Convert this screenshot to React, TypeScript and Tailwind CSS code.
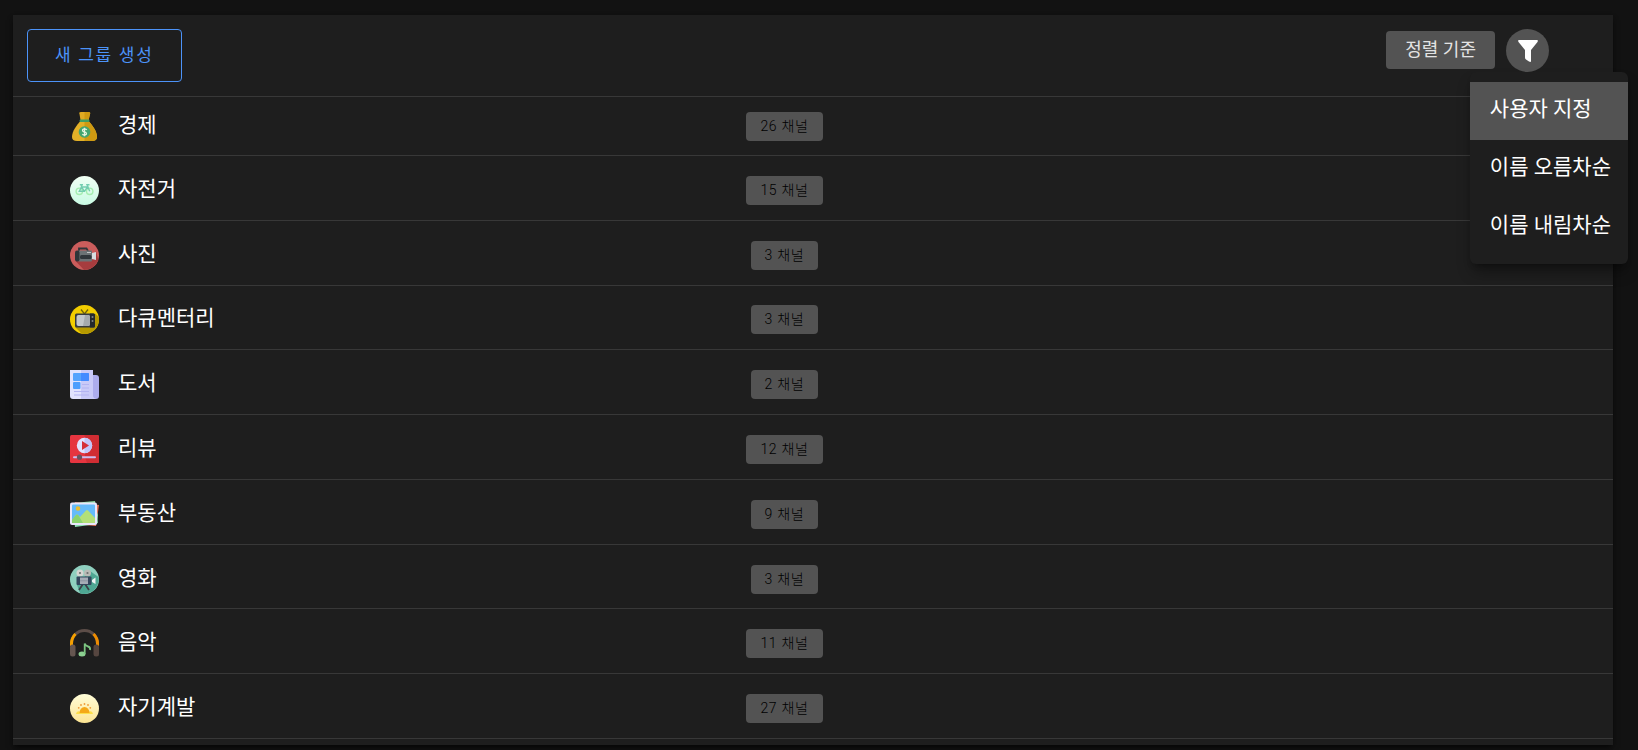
import type { ReactNode } from "react";

function MoneyIcon() {
  return (
    <>
      <path d="M9.500 2Q8.500 0 11 0H18Q21 0 20 2L18.500 8H10.500Z" fill="#e0ab23" />
      <path d="M10.500 9H18.500C22 13 27 19 27 25Q27 29 22 29H7Q2 29 2 25C2 19 7 13 10.500 9Z" fill="#e3b128" />
      <path d="M14.500 0H18Q21 0 20 2L18.500 9C22 13 27 19 27 25Q27 29 22 29H14.500Z" fill="#cf9a12" />
      <rect x="9.500" y="7.500" width="10" height="2.500" rx="1.200" fill="#3f9d63" />
      <circle cx="14.500" cy="20" r="5.800" fill="#43a56f" />
      <path d="M16.800 17.800Q14.500 16 12.700 17.600Q12 19.500 14.500 20Q17 20.600 16.300 22.300Q14.500 24 12.300 22.200M14.500 15.800V24.200" fill="none" stroke="#e6f3df" strokeWidth="1.300" />
    </>
  );
}

function BicycleIcon() {
  return (
    <>
      <defs>
        <linearGradient id="bike-bg" x1="0" y1="0" x2="0" y2="1">
          <stop offset="0" stopColor="#f1fff4" />
          <stop offset="1" stopColor="#c9fbe4" />
        </linearGradient>
      </defs>
      <circle cx="14.500" cy="14.500" r="14.500" fill="url(#bike-bg)" />
      <g fill="none" strokeWidth="1.400">
        <circle cx="9.300" cy="15.300" r="3.200" stroke="#a5eeb0" />
        <circle cx="19.700" cy="15.300" r="3.200" stroke="#a5eeb0" />
        <path d="M9.300 15.300L11.500 11H17.500L14.500 15.300ZM11.500 11L14.500 15.300M19.700 15.300L17 8.800H19.500M11.500 11V8.800M9.800 8.800H13" stroke="#74cdb0" />
      </g>
    </>
  );
}

function CamcorderIcon() {
  return (
    <>
      <circle cx="14.500" cy="14.500" r="14.500" fill="#cb5d5c" />
      <path d="M5.500 20L14 28.900Q24 29 28.400 19L26 10L22 19Z" fill="#a63c3e" />
      <path d="M9 10V7.500H16.500L18 10" fill="none" stroke="#303539" strokeWidth="1.800" />
      <rect x="8" y="9.500" width="14" height="11" rx="1" fill="#6c7275" />
      <rect x="5" y="9.500" width="4.500" height="11" rx="2" fill="#303539" />
      <rect x="10" y="14" width="11.500" height="4" rx="1.500" fill="#30363b" />
      <path d="M17 11.500H21" stroke="#bfc3c5" />
      <path d="M22 12L26 11V19L22 18Z" fill="#d9dde0" />
    </>
  );
}

function TelevisionIcon() {
  return (
    <>
      <circle cx="14.500" cy="14.500" r="14.500" fill="#f2cd00" />
      <path d="M5.500 22.500L11.500 28.600A14.500 14.500 0 0 0 28.800 12L25 8.500Z" fill="#b69900" />
      <path d="M11 4.500L14.500 9L18 4.500" fill="none" stroke="#70620c" strokeWidth="1.300" />
      <rect x="5" y="8.500" width="20" height="14" rx="1.500" fill="#373b3f" />
      <path d="M20 8.500H23.500Q25 8.500 25 10V21Q25 22.500 23.500 22.500H20Z" fill="#24282c" />
      <rect x="6.500" y="10" width="13.500" height="11" rx="2" fill="#c3c7ca" />
      <path d="M15 10H18Q20 10 20 12V19Q20 21 18 21H13Z" fill="#a5aaae" />
      <circle cx="22.500" cy="12" r="1" fill="#81868a" />
      <circle cx="22.500" cy="16" r="1" fill="#81868a" />
    </>
  );
}

function NewspaperIcon() {
  return (
    <>
      <path d="M22 5H26Q29 5 29 8V26Q29 29 26 29H20Z" fill="#acaced" />
      <path d="M0 0H23V26Q23 29 26 29H3Q0 29 0 26Z" fill="#e2e3fd" />
      <path d="M11 0H23V26Q23 29 26 29H11Z" fill="#c9caf8" />
      <rect x="3" y="3" width="16" height="8" rx="1" fill="#56a4fd" />
      <path d="M11 3H18Q19 3 19 4V10Q19 11 18 11H11Z" fill="#438bff" />
      <rect x="3" y="12" width="7.500" height="7" rx="1" fill="#4f9ffd" />
      <path d="M12 14.500H19M12 18H19M4 21.500H19M4 25H19" stroke="#b3b4f2" />
    </>
  );
}

function VideoIcon() {
  return (
    <>
      <rect width="29" height="28" rx="1.500" fill="#e63540" />
      <path d="M14.500 0H27.500Q29 0 29 1.500V26.500Q29 28 27.500 28H17Q13 20 14.500 0Z" fill="#d02d33" />
      <circle cx="14.500" cy="10.500" r="7.700" fill="#e1e3ff" />
      <path d="M14.500 2.800A7.700 7.700 0 0 1 14.500 18.200Z" fill="#c3c6fa" />
      <path d="M12 6L19 10.500L12 15Z" fill="#d62f38" />
      <path d="M4 22.200H25" stroke="#ccbdf0" strokeWidth="2" strokeLinecap="round" />
      <circle cx="9.500" cy="22.200" r="2.600" fill="#69535f" />
    </>
  );
}

function PhotosIcon() {
  return (
    <>
      <path d="M3 3L25 1L28 23L6 26Z" fill="#8bd9a0" />
      <path d="M5 2L29 5L26 26L3 24Z" fill="#e7765b" />
      <path d="M24 3L28 15L27 24L5 27L3 5Z" fill="#8fe1b7" />
      <rect y="2.500" width="27" height="22.500" rx="2" fill="#e9e7fb" />
      <rect x="2" y="4.500" width="23" height="18.500" rx="1" fill="#65bbfa" />
      <circle cx="8" cy="8.500" r="2.300" fill="#e9bd32" />
      <path d="M2 20L6 15Q7 14 8.500 15.500L10 17L16 10.500Q17 9.500 18 10.500L25 18V23H2Z" fill="#b3e078" />
      <path d="M2 20L6 15Q7 14 8.500 15.500L13 23H2Z" fill="#8bd36e" />
    </>
  );
}

function MovieCameraIcon() {
  return (
    <>
      <circle cx="14.500" cy="14.500" r="14.500" fill="#8fd0bf" />
      <path d="M20 6L28.500 12A14.500 14.500 0 0 1 10 28.300L7 20Z" fill="#4ea793" />
      <path d="M13 19L9 25M15 19L19 25" stroke="#3c4148" strokeWidth="1.800" />
      <circle cx="10" cy="8" r="3.500" fill="#d6d6d2" />
      <circle cx="17.500" cy="8" r="3.500" fill="#b9bab6" />
      <circle cx="10" cy="8" r="1.100" fill="#6d7070" />
      <circle cx="17.500" cy="8" r="1.100" fill="#6d7070" />
      <rect x="6.500" y="11.500" width="15" height="8.500" rx="1" fill="#34465d" />
      <rect x="10" y="12.500" width="8" height="6.500" fill="#a5acb6" />
      <path d="M10 15.800H18" stroke="#8c95a2" />
      <path d="M22 15L25.500 12.500V19L22 17Z" fill="#f0f3f3" />
    </>
  );
}

function HeadphonesIcon() {
  return (
    <>
      <path d="M1.500 17V14.500A13 13 0 0 1 27.500 14.500V17" fill="none" stroke="#5c4d48" strokeWidth="3" />
      <path d="M1.500 17V14.500Q1.500 9 5.500 5" fill="none" stroke="#f6a000" strokeWidth="3" />
      <path d="M27.500 17V14.500Q27.500 9 23.500 5" fill="none" stroke="#ee8c00" strokeWidth="3" />
      <rect y="15.500" width="5.500" height="12" rx="2.500" fill="#665650" />
      <rect x="23.500" y="15.500" width="5.500" height="12" rx="2.500" fill="#564640" />
      <ellipse cx="12" cy="25" rx="3.500" ry="2.500" fill="#8ccf91" />
      <path d="M14.700 25V14.500Q15.500 17 18 17.500Q20.500 18 20 21" fill="none" stroke="#7cc582" strokeWidth="1.800" />
    </>
  );
}

function SunriseIcon() {
  return (
    <>
      <defs>
        <linearGradient id="sunrise-bg" x1="0" y1="0" x2="0" y2="1">
          <stop offset="0" stopColor="#fffdd8" />
          <stop offset="1" stopColor="#fce493" />
        </linearGradient>
      </defs>
      <circle cx="14.500" cy="14.500" r="14.500" fill="url(#sunrise-bg)" />
      <path d="M6 20Q6.500 16.800 9.500 17.500H19.500Q22.500 16.800 23 20Z" fill="#fcdf4b" />
      <path d="M9.500 19A5 6 0 0 1 19.500 19Z" fill="#f4a818" />
      <g fill="#ee9c3b">
        <circle cx="8.700" cy="13.800" r="0.900" />
        <circle cx="11" cy="11" r="0.900" />
        <circle cx="14.500" cy="10" r="0.900" />
        <circle cx="18" cy="11" r="0.900" />
        <circle cx="20.300" cy="13.800" r="0.900" />
      </g>
    </>
  );
}

type Group = { name: string; channels: number; icon: ReactNode };

const groups: Group[] = [
  { name: "경제", channels: 26, icon: <MoneyIcon /> },
  { name: "자전거", channels: 15, icon: <BicycleIcon /> },
  { name: "사진", channels: 3, icon: <CamcorderIcon /> },
  { name: "다큐멘터리", channels: 3, icon: <TelevisionIcon /> },
  { name: "도서", channels: 2, icon: <NewspaperIcon /> },
  { name: "리뷰", channels: 12, icon: <VideoIcon /> },
  { name: "부동산", channels: 9, icon: <PhotosIcon /> },
  { name: "영화", channels: 3, icon: <MovieCameraIcon /> },
  { name: "음악", channels: 11, icon: <HeadphonesIcon /> },
  { name: "자기계발", channels: 27, icon: <SunriseIcon /> }
];

const sortOptions = ["사용자 지정", "이름 오름차순", "이름 내림차순"];

function GroupRow({ group }: { group: Group }) {
  return (
    <li className="grid grow grid-cols-3 items-center border-b border-[#383838] pt-[19px] pr-[114px] pb-[14px] pl-[57px] first:grow-0 first:pt-[15px]">
      <div className="flex items-center gap-[19px]">
        <svg viewBox="0 0 29 29" className="size-[29px] shrink-0" aria-hidden="true">
          {group.icon}
        </svg>
        <span className="pb-[3px] text-[21px] leading-[26px] text-white">{group.name}</span>
      </div>
      <span className="justify-self-center rounded bg-[#535353] px-[14px] text-sm leading-[29px] font-light tracking-wider text-black">
        {group.channels} 채널
      </span>
    </li>
  );
}

function SortMenu() {
  return (
    <div role="menu" className="absolute top-[57px] -right-[15px] flex flex-col rounded-md bg-[#1e1e1e] pt-[10px] pb-2 shadow-lg shadow-black/40">
      {sortOptions.map((option, index) => (
        <button
          key={option}
          type="button"
          role="menuitem"
          className={`pr-[17px] pb-1 pl-5 text-left text-[21px] leading-[54px] text-white ${index === 0 ? "bg-[#535353]" : ""}`}
        >
          {option}
        </button>
      ))}
    </div>
  );
}

export default function App() {
  return (
    <div className="flex min-h-screen flex-col bg-[#121212] pt-[15px] pr-[25px] pb-[5px] pl-[13px] font-[Roboto,'Noto_Sans_CJK_KR',sans-serif]">
      <main className="relative flex grow flex-col bg-[#1e1e1e] pb-[6px] shadow-md shadow-black/50">
        <header className="flex items-start justify-between border-b border-[#383838] pt-[14px] pr-16 pb-[14px] pl-[14px]">
          <button type="button" className="rounded border border-[#4c93f8] px-[27px] text-[17px] leading-[51px] tracking-widest text-[#4c93f8]">
            새 그룹 생성
          </button>
          <div className="flex items-center gap-[11px]">
            <span className="mb-[2px] rounded bg-[#535353] px-[19px] text-lg leading-[38px] text-[#e3e3e3]">정렬 기준</span>
            <button type="button" aria-label="정렬 기준 선택" className="grid size-[43px] place-items-center rounded-full bg-[#535353]">
              <svg viewBox="0 0 20 22" className="h-[22px] w-5" aria-hidden="true">
                <path d="M1 0H19Q20.500 0 19.500 2L13 10V21Q13 22.500 11 21.500L8 19.500Q7 19 7 17.500V10L0.500 2Q-0.500 0 1 0Z" fill="#fff" />
              </svg>
            </button>
          </div>
        </header>
        <ul className="flex grow flex-col">
          {groups.map((group) => (
            <GroupRow key={group.name} group={group} />
          ))}
        </ul>
        <SortMenu />
      </main>
    </div>
  );
}
